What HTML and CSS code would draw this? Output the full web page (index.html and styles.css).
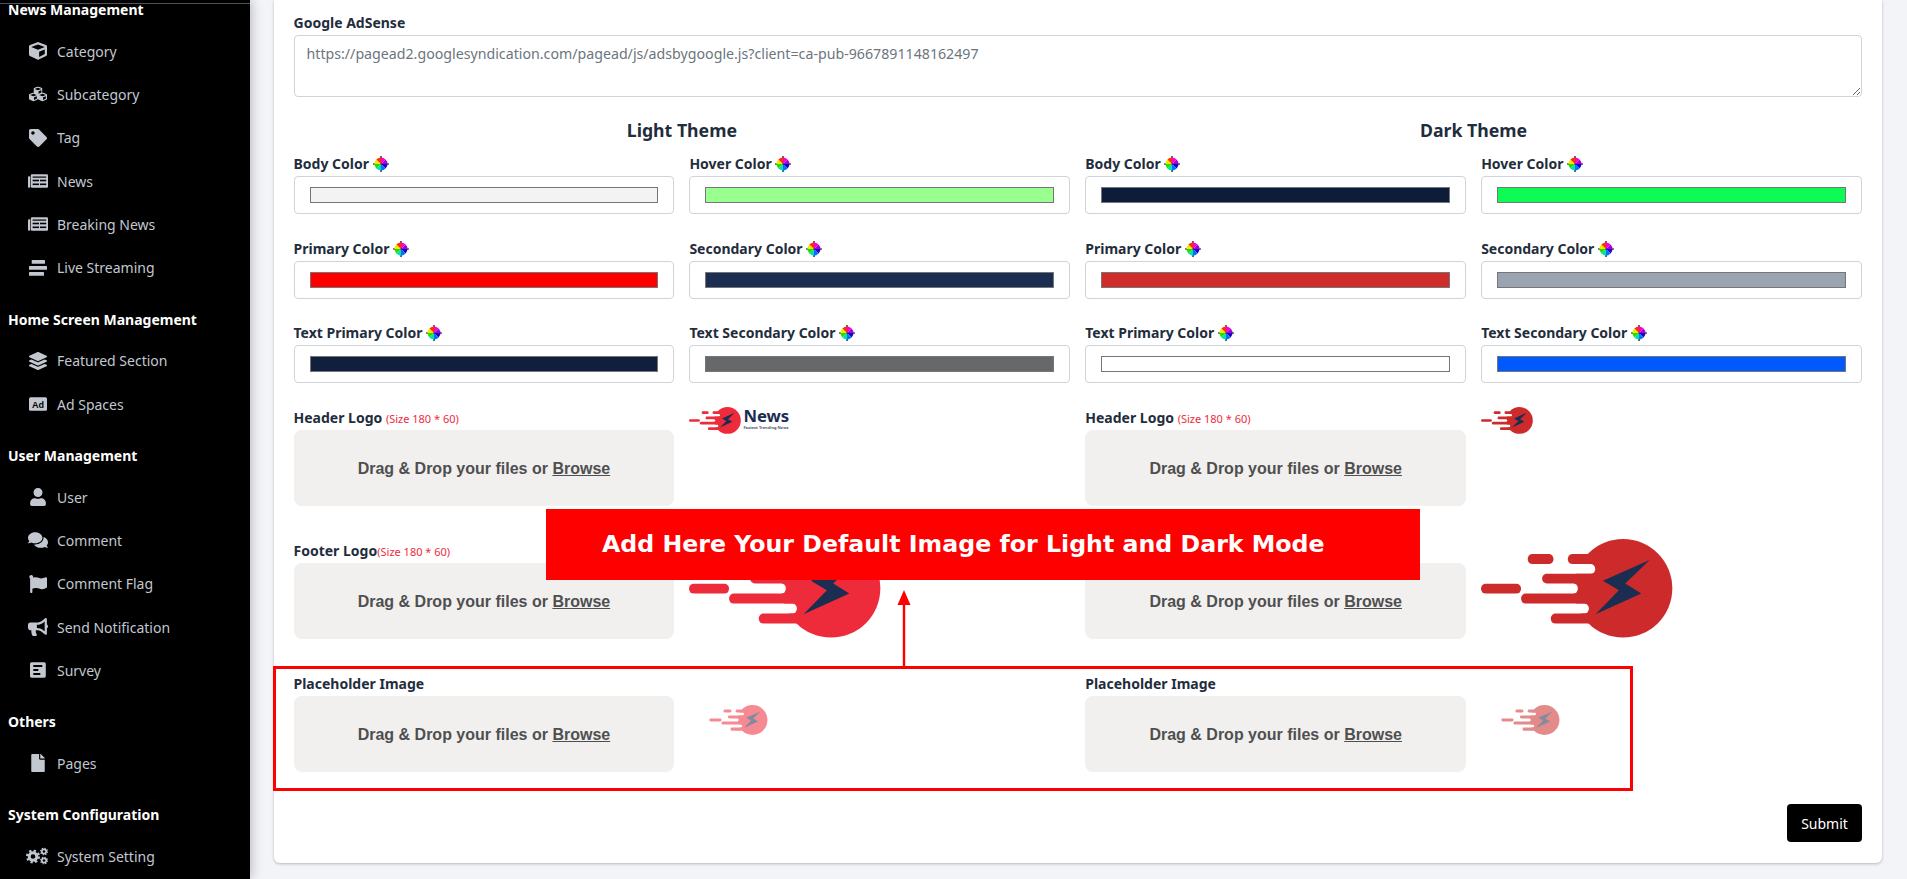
FILE: index.html
```html
<!DOCTYPE html>
<html lang="en">
<head>
  <meta charset="UTF-8" />
  <meta name="viewport" content="width=device-width, initial-scale=1.0"/>
  <title>System Setting | News Admin</title>
  <link rel="stylesheet" href="styles.css">
</head>
<body>

<svg class="defs" aria-hidden="true">
  <symbol id="logo" viewBox="65 445 575 296">
    <circle cx="490.5" cy="592.5" r="147.5" fill="currentColor"/>
    <rect x="200" y="520" width="207" height="29" rx="14" fill="#fff"/>
    <rect x="200" y="578" width="155" height="30" rx="14" fill="#fff"/>
    <rect x="200" y="638" width="188" height="30" rx="14" fill="#fff"/>
    <rect x="205" y="490" width="77" height="30" rx="14" fill="currentColor"/>
    <rect x="325" y="490" width="120" height="30" rx="14" fill="currentColor"/>
    <rect x="248" y="549" width="220" height="29" rx="14" fill="currentColor"/>
    <rect x="65" y="579" width="120" height="29" rx="14" fill="currentColor"/>
    <rect x="185" y="608" width="280" height="30" rx="14" fill="currentColor"/>
    <rect x="274" y="668" width="190" height="30" rx="14" fill="currentColor"/>
    <polygon points="570,508 430,570 478,598 408,670 545,608 497,578" fill="#1b2d51"/>
  </symbol>
  <symbol id="cube" viewBox="0 0 512 512">
    <path d="M239.1 6.3l-208 78c-18.7 7-31.1 25-31.1 45v225.1c0 18.2 10.3 34.8 26.5 42.9l208 104c13.5 6.8 29.4 6.8 42.9 0l208-104c16.3-8.1 26.5-24.8 26.5-42.9V129.3c0-20-12.4-37.9-31.1-44.9l-208-78C262 2.2 250 2.2 239.1 6.3zM256 68.4l192 72v1.1l-192 78-192-78v-1.1l192-72zm32 356V275.5l160-65v133.9l-160 80z"/>
  </symbol>
  <symbol id="newspaper" viewBox="0 0 20 13.4">
    <rect x="0" y="2" width="2.2" height="11.4" rx=".9"/>
    <rect x="2.8" y="0" width="17.2" height="13.4" rx="1.2"/>
    <rect x="4.6" y="2.2" width="13.6" height="1.2" fill="#000"/>
    <rect x="4.6" y="5.4" width="6.4" height="1.6" fill="#000"/>
    <rect x="12" y="5.4" width="6.2" height="1.6" fill="#000"/>
    <rect x="4.6" y="9.2" width="6.4" height="1.6" fill="#000"/>
    <rect x="12" y="9.2" width="6.2" height="1.6" fill="#000"/>
  </symbol>
  <symbol id="gear" viewBox="0 0 24 24">
    <circle cx="12" cy="12" r="6.5" fill="none" stroke="currentColor" stroke-width="5"/>
    <circle cx="12" cy="12" r="10" fill="none" stroke="currentColor" stroke-width="4" stroke-dasharray="3.9 3.95"/>
  </symbol>
  <symbol id="wheel" viewBox="0 0 16 16">
    <path d="M8 0v16M0 8h16" stroke="#000" stroke-width="1.2"/>
    <path d="M8 1.5A6.5 6.5 0 0 1 12.6 3.4L8 8z" fill="#ff00c8"/>
    <path d="M12.6 3.4A6.5 6.5 0 0 1 14.5 8H8z" fill="#a400d8"/>
    <path d="M14.5 8A6.5 6.5 0 0 1 12.6 12.6L8 8z" fill="#1a00c8"/>
    <path d="M12.6 12.6A6.5 6.5 0 0 1 8 14.5V8z" fill="#0070ff"/>
    <path d="M8 14.5A6.5 6.5 0 0 1 3.4 12.6L8 8z" fill="#00e0b0"/>
    <path d="M3.4 12.6A6.5 6.5 0 0 1 1.5 8H8z" fill="#20e000"/>
    <path d="M1.5 8A6.5 6.5 0 0 1 3.4 3.4L8 8z" fill="#f4e800"/>
    <path d="M3.4 3.4A6.5 6.5 0 0 1 8 1.5V8z" fill="#ff3000"/>
  </symbol>
</svg>

<div class="app">

  <aside class="sidebar">
    <div class="side-rule"></div>

    <h4 class="side-title">News Management</h4>
    <ul class="side-menu">
      <li><svg class="ic"><use href="#cube"/></svg>Category</li>
      <li>
        <svg class="ic" viewBox="-1.33 -2 26.67 24">
          <use href="#cube" x="6" y="0" width="12" height="12"/>
          <use href="#cube" x="0" y="8" width="12" height="12"/>
          <use href="#cube" x="12" y="8" width="12" height="12"/>
        </svg>Subcategory
      </li>
      <li><svg class="ic" viewBox="0 0 512 512"><path d="M0 252.118V48C0 21.49 21.49 0 48 0h204.118a48 48 0 0 1 33.941 14.059l211.882 211.882c18.745 18.745 18.745 49.137 0 67.882L293.823 497.941c-18.745 18.745-49.137 18.745-67.882 0L14.059 286.059A48 48 0 0 1 0 252.118zM112 64c-26.51 0-48 21.49-48 48s21.49 48 48 48 48-21.49 48-48-21.49-48-48-48z"/></svg>Tag</li>
      <li><svg class="ic"><use href="#newspaper"/></svg>News</li>
      <li><svg class="ic"><use href="#newspaper"/></svg>Breaking News</li>
      <li>
        <svg class="ic" viewBox="0 0 20 18">
          <rect x="3.7" y="1" width="13.3" height="3.8" rx=".6"/>
          <rect x="1" y="7" width="18" height="3.8" rx=".6"/>
          <rect x="1" y="13" width="15" height="3.8" rx=".6"/>
        </svg>Live Streaming
      </li>
    </ul>

    <h4 class="side-title">Home Screen Management</h4>
    <ul class="side-menu">
      <li><svg class="ic" viewBox="0 0 512 512"><path d="M12.41 148.02l232.94 105.67c6.8 3.09 14.49 3.09 21.29 0l232.94-105.67c16.55-7.51 16.55-32.52 0-40.03L266.65 2.31a25.607 25.607 0 0 0-21.29 0L12.41 107.98c-16.55 7.51-16.55 32.53 0 40.04zm487.18 88.28l-58.09-26.33-161.64 73.27c-7.56 3.43-15.59 5.17-23.86 5.17s-16.29-1.74-23.86-5.17L70.51 209.97l-58.1 26.33c-16.55 7.5-16.55 32.5 0 40l232.94 105.59c6.8 3.08 14.49 3.08 21.29 0L499.59 276.3c16.55-7.5 16.55-32.5 0-40zm0 127.8l-57.87-26.23-161.86 73.37c-7.56 3.43-15.59 5.17-23.86 5.17s-16.29-1.74-23.86-5.17L70.29 337.87 12.41 364.1c-16.55 7.5-16.55 32.5 0 40l232.94 105.59c6.8 3.08 14.49 3.08 21.29 0L499.59 404.1c16.55-7.5 16.55-32.5 0-40z"/></svg>Featured Section</li>
      <li>
        <svg class="ic" viewBox="0 0 20 18">
          <rect x="1" y="2.3" width="18" height="13.4" rx="1.5"/>
          <text x="10" y="12.6" class="ad-text" text-anchor="middle">Ad</text>
        </svg>Ad Spaces
      </li>
    </ul>

    <h4 class="side-title">User Management</h4>
    <ul class="side-menu">
      <li><svg class="ic" viewBox="0 0 448 512"><path d="M224 256c70.7 0 128-57.3 128-128S294.7 0 224 0 96 57.3 96 128s57.3 128 128 128zm89.6 32h-16.7c-22.2 10.2-46.9 16-72.9 16s-50.6-5.8-72.9-16h-16.7C60.2 288 0 348.2 0 422.4V464c0 26.5 21.5 48 48 48h352c26.5 0 48-21.5 48-48v-41.6c0-74.2-60.2-134.4-134.4-134.4z"/></svg>User</li>
      <li><svg class="ic" viewBox="0 0 576 512"><path d="M416 192c0-88.4-93.1-160-208-160S0 103.6 0 192c0 34.3 14.1 65.9 38 92-13.4 30.2-35.5 54.2-35.8 54.5-2.2 2.3-2.8 5.7-1.5 8.7S4.8 352 8 352c36.6 0 66.9-12.3 88.7-25 32.2 15.7 70.3 25 111.3 25 114.9 0 208-71.6 208-160zm122 220c23.9-26 38-57.7 38-92 0-66.9-53.5-124.2-129.3-148.1.9 6.6 1.3 13.3 1.3 20.1 0 105.9-107.7 192-240 192-10.8 0-21.3-.8-31.7-1.9C207.8 439.6 281.8 480 368 480c41 0 79.1-9.2 111.3-25 21.8 12.7 52.1 25 88.7 25 3.2 0 6.1-1.9 7.3-4.8 1.3-2.9.7-6.3-1.5-8.7-.3-.3-22.4-24.2-35.8-54.5z"/></svg>Comment</li>
      <li><svg class="ic" viewBox="0 0 512 512"><path d="M349.565 98.783C295.978 98.783 251.721 64 184.348 64c-24.955 0-47.309 4.384-68.045 12.013a55.947 55.947 0 0 0 3.586-23.562C118.117 24.015 94.806 1.206 66.338.048 34.345-1.254 8 24.296 8 56c0 19.026 9.497 35.825 24 45.945V488c0 13.255 10.745 24 24 24h16c13.255 0 24-10.745 24-24v-94.4c28.311-12.064 63.582-22.122 114.435-22.122 53.588 0 97.844 34.783 165.217 34.783 48.169 0 86.667-16.294 122.505-40.858C506.84 359.452 512 349.571 512 339.045v-243.1c0-23.393-24.269-38.87-45.485-29.016-34.338 15.948-76.454 31.854-116.95 31.854z"/></svg>Comment Flag</li>
      <li><svg class="ic" viewBox="0 0 576 512"><path d="M576 240c0-23.63-12.95-44.04-32-55.12V32.01C544 23.26 537.02 0 512 0c-7.12 0-14.19 2.38-19.98 7.02l-85.03 68.03C364.28 109.19 310.66 128 256 128H64c-35.35 0-64 28.65-64 64v96c0 35.35 28.65 64 64 64h33.7c-1.39 10.48-2.18 21.14-2.18 32 0 39.77 9.26 77.35 25.56 110.94 5.19 10.69 16.52 17.06 28.4 17.06h74.28c26.05 0 41.69-29.84 25.9-50.56-16.4-21.52-26.15-48.36-26.15-77.44 0-11.11 1.62-21.79 4.41-32H256c54.66 0 108.28 18.81 150.98 52.95l85.03 68.03a32.023 32.023 0 0 0 19.98 7.02c24.92 0 32-22.78 32-32V295.13C563.05 284.04 576 263.63 576 240zm-96 141.42l-33.05-26.44C392.95 311.78 325.12 288 256 288v-96c69.12 0 136.95-23.78 190.95-66.98L480 98.58v282.84z"/></svg>Send Notification</li>
      <li>
        <svg class="ic" viewBox="0 0 20 18">
          <rect x="2" y="1.3" width="15.8" height="15.4" rx="1.6"/>
          <rect x="5.3" y="4" width="9" height="2" fill="#000"/>
          <rect x="5.3" y="8" width="5" height="2" fill="#000"/>
          <rect x="5.3" y="12" width="7" height="2" fill="#000"/>
        </svg>Survey
      </li>
    </ul>

    <h4 class="side-title">Others</h4>
    <ul class="side-menu">
      <li><svg class="ic" viewBox="0 0 384 512"><path d="M224 136V0H24C10.7 0 0 10.7 0 24v464c0 13.3 10.7 24 24 24h336c13.3 0 24-10.7 24-24V160H248c-13.2 0-24-10.8-24-24zm160-14.1v6.1H256V0h6.1c6.4 0 12.5 2.5 17 7l97.9 98c4.5 4.5 7 10.6 7 16.9z"/></svg>Pages</li>
    </ul>

    <h4 class="side-title">System Configuration</h4>
    <ul class="side-menu">
      <li>
        <svg class="ic ic-wide" viewBox="0 0 22 17">
          <use href="#gear" x="0" y="2" width="14" height="14"/>
          <use href="#gear" x="14" y="0" width="8" height="8"/>
          <use href="#gear" x="14" y="9" width="8" height="8"/>
        </svg>System Setting
      </li>
    </ul>
  </aside>

  <main class="content">
    <form class="card">
      <label class="label" for="adsense">Google AdSense</label>
      <textarea id="adsense" class="textarea" readonly>https://pagead2.googlesyndication.com/pagead/js/adsbygoogle.js?client=ca-pub-9667891148162497</textarea>

      <div class="theme-titles">
        <h3>Light Theme</h3>
        <h3>Dark Theme</h3>
      </div>

      <div class="row">
        <div class="field"><label class="label">Body Color <svg class="wheel"><use href="#wheel"/></svg></label><input class="color" type="color" value="#f3f3f3"></div>
        <div class="field"><label class="label">Hover Color <svg class="wheel"><use href="#wheel"/></svg></label><input class="color" type="color" value="#99ff8f"></div>
        <div class="field"><label class="label">Body Color <svg class="wheel"><use href="#wheel"/></svg></label><input class="color" type="color" value="#0d1c38"></div>
        <div class="field"><label class="label">Hover Color <svg class="wheel"><use href="#wheel"/></svg></label><input class="color" type="color" value="#0dfb55"></div>
      </div>
      <div class="row">
        <div class="field"><label class="label">Primary Color <svg class="wheel"><use href="#wheel"/></svg></label><input class="color" type="color" value="#ff0000"></div>
        <div class="field"><label class="label">Secondary Color <svg class="wheel"><use href="#wheel"/></svg></label><input class="color" type="color" value="#1b2d51"></div>
        <div class="field"><label class="label">Primary Color <svg class="wheel"><use href="#wheel"/></svg></label><input class="color" type="color" value="#cf2c2c"></div>
        <div class="field"><label class="label">Secondary Color <svg class="wheel"><use href="#wheel"/></svg></label><input class="color" type="color" value="#9aa3b0"></div>
      </div>
      <div class="row">
        <div class="field"><label class="label">Text Primary Color <svg class="wheel"><use href="#wheel"/></svg></label><input class="color" type="color" value="#0f1f3d"></div>
        <div class="field"><label class="label">Text Secondary Color <svg class="wheel"><use href="#wheel"/></svg></label><input class="color" type="color" value="#67686a"></div>
        <div class="field"><label class="label">Text Primary Color <svg class="wheel"><use href="#wheel"/></svg></label><input class="color" type="color" value="#ffffff"></div>
        <div class="field"><label class="label">Text Secondary Color <svg class="wheel"><use href="#wheel"/></svg></label><input class="color" type="color" value="#0059ff"></div>
      </div>

      <div class="row upload-row">
        <div>
          <label class="label">Header Logo <small>(Size 180 * 60)</small></label>
          <div class="drop">Drag &amp; Drop your files or&nbsp;<u>Browse</u></div>
        </div>
        <div class="brand">
          <svg class="logo-sm light"><use href="#logo"/></svg>
          <div class="brand-text"><b>News</b><span>Fastest Trending News</span></div>
        </div>
        <div>
          <label class="label">Header Logo <small>(Size 180 * 60)</small></label>
          <div class="drop">Drag &amp; Drop your files or&nbsp;<u>Browse</u></div>
        </div>
        <div class="brand">
          <svg class="logo-sm dark"><use href="#logo"/></svg>
        </div>
      </div>

      <div class="row upload-row">
        <div>
          <label class="label">Footer Logo<small>(Size 180 * 60)</small></label>
          <div class="drop">Drag &amp; Drop your files or&nbsp;<u>Browse</u></div>
        </div>
        <div class="brand brand-lg">
          <svg class="logo-lg light"><use href="#logo"/></svg>
        </div>
        <div>
          <label class="label">Footer Logo<small>(Size 180 * 60)</small></label>
          <div class="drop">Drag &amp; Drop your files or&nbsp;<u>Browse</u></div>
        </div>
        <div class="brand brand-lg">
          <svg class="logo-lg dark"><use href="#logo"/></svg>
        </div>
      </div>

      <div class="row upload-row">
        <div>
          <label class="label">Placeholder Image</label>
          <div class="drop">Drag &amp; Drop your files or&nbsp;<u>Browse</u></div>
        </div>
        <div class="brand brand-ph">
          <svg class="logo-ph light"><use href="#logo"/></svg>
        </div>
        <div>
          <label class="label">Placeholder Image</label>
          <div class="drop">Drag &amp; Drop your files or&nbsp;<u>Browse</u></div>
        </div>
        <div class="brand brand-ph">
          <svg class="logo-ph dark"><use href="#logo"/></svg>
        </div>
      </div>

      <div class="actions">
        <button type="button" class="submit">Submit</button>
      </div>
    </form>
  </main>

</div>

<!-- annotation drawn over the screenshot -->
<div class="note-box"></div>
<div class="note-banner">Add Here Your Default Image for Light and Dark Mode</div>
<svg class="note-arrow" viewBox="0 0 14 77">
  <path d="M7 0L13.5 15H8.2V77H5.8V15H.5z" fill="#f00"/>
</svg>

</body>
</html>
```

FILE: styles.css
```css
* {
  box-sizing: border-box;
}
html, body {
  margin: 0;
  height: 879px;
  overflow: hidden;
}
body {
  position: relative;
  font-family: "Noto Sans", sans-serif;
  font-size: 14px;
  background-color: #f2f4f8;
  color: #1f2d3d;
}
.defs {
  position: absolute;
  width: 0;
  height: 0;
}

.app {
  display: flex;
  height: 879px;
}

/* sidebar */
.sidebar {
  flex: 0 0 250px;
  height: 879px;
  overflow: hidden;
  background: #000;
  padding-top: 3px;
  box-shadow: 0 0 12px rgba(0,0,0,0.3);
}
.side-rule {
  height: 1px;
  margin-bottom: -4px;
  background: #4b545c;
}
.side-title {
  margin: 0 0 9.5px;
  padding-left: 8px;
  font-size: 14px;
  line-height: 20px;
  font-weight: 700;
  color: #fff;
}
.side-menu {
  list-style: none;
  margin: 0 0 20.3px;
  padding: 0;
}
.side-menu li {
  display: flex;
  align-items: center;
  height: 43.3px;
  padding-left: 28px;
  font-size: 14px;
  color: #c2c7d0;
}
.ic {
  flex: 0 0 20px;
  width: 20px;
  height: 18px;
  margin-right: 9px;
  fill: #c2c7d0;
  color: #c2c7d0;
}
.ic-wide {
  flex-basis: 22px;
  width: 22px;
  margin-left: -2px;
}
.ad-text {
  font-family: "Liberation Sans", sans-serif;
  font-size: 9px;
  font-weight: 700;
  fill: #000;
}

/* main */
.content {
  flex: 1;
  padding: 0 25px 16px 24px;
  min-width: 0;
}
.card {
  height: 863px;
  padding: 12px 20px 20px 19.5px;
  background: #fff;
  border-radius: 0 0 6px 6px;
  box-shadow: 0 1px 3px rgba(0,0,0,0.25);
}
.label {
  display: block;
  height: 21px;
  margin-bottom: 2px;
  font-size: 14px;
  line-height: 21px;
  font-weight: 700;
  color: #1f2d3d;
}
.label small {
  font-size: 11px;
  font-weight: 400;
  color: #ee2b3b;
}
.wheel {
  width: 16px;
  height: 16px;
  vertical-align: -3px;
}
.textarea {
  display: block;
  width: 100%;
  height: 62px;
  padding: 7px 12px 6px;
  border: 1px solid #ced4da;
  border-radius: 4px;
  font-family: inherit;
  font-size: 14.2px;
  line-height: 21px;
  color: #6c757d;
  resize: vertical;
  outline: none;
}
.theme-titles {
  display: grid;
  grid-template-columns: 1fr 1fr;
  column-gap: 15px;
  margin-top: 20px;
  margin-bottom: 10.4px;
}
.theme-titles h3 {
  margin: 0;
  font-size: 17.7px;
  line-height: 26px;
  font-weight: 700;
  text-align: center;
  color: #1f2d3d;
}
.row {
  display: grid;
  grid-template-columns: repeat(4, 1fr);
  column-gap: 15px;
}
.field {
  margin-bottom: 23.5px;
}
.color {
  display: block;
  width: 100%;
  height: 38px;
  padding: 10px 15px;
  background: #fff;
  border: 1px solid #ced4da;
  border-radius: 4px;
}
.color::-webkit-color-swatch-wrapper {
  padding: 0;
}
.color::-webkit-color-swatch {
  border: 1px solid #767676;
  border-radius: 0;
}

/* uploads */
.upload-row {
  margin-bottom: 33.5px;
}
.upload-row .label {
  margin-bottom: 2.5px;
}
.drop {
  display: flex;
  align-items: center;
  justify-content: center;
  height: 76px;
  padding-top: 1px;
  background: #f1f0ef;
  border-radius: 8px;
  font-family: "Liberation Sans", sans-serif;
  font-size: 16px;
  font-weight: 700;
  color: #4f4f4f;
}
.light {
  color: #ee2b3b;
}
.dark {
  color: #cd2b2b;
}
.brand {
  display: flex;
  align-items: flex-start;
}
.logo-sm {
  width: 52px;
  height: 27px;
}
.brand-text {
  display: flex;
  flex-direction: column;
  margin-left: 2px;
  color: #1b2d51;
}
.brand-text b {
  font-size: 16.7px;
  line-height: 18px;
}
.brand-text span {
  font-size: 4px;
  line-height: 5px;
  font-weight: 700;
  opacity: 0.8;
}
.brand-lg {
  margin-top: -1px;
}
.logo-lg {
  width: 192px;
  height: 99px;
}
.brand-ph {
  padding: 32px 0 0 20px;
}
.logo-ph {
  width: 59px;
  height: 30px;
  opacity: 0.55;
}
.actions {
  display: flex;
  justify-content: flex-end;
  margin-top: -1.5px;
}
.submit {
  width: 75px;
  height: 38px;
  background: #000;
  color: #fff;
  border: none;
  border-radius: 4px;
  font-family: inherit;
  font-size: 14px;
  cursor: pointer;
}

/* annotation */
.note-box {
  position: absolute;
  left: 273px;
  top: 666px;
  width: 1360px;
  height: 125px;
  border: 3px solid #f00;
}
.note-banner {
  position: absolute;
  left: 546px;
  top: 509px;
  width: 874px;
  height: 71px;
  padding-left: 56px;
  background: #f00;
  color: #fff;
  font-family: "DejaVu Sans", sans-serif;
  font-size: 23.68px;
  font-weight: 700;
  line-height: 71px;
}
.note-arrow {
  position: absolute;
  left: 897px;
  top: 590px;
  width: 14px;
  height: 77px;
}
```
